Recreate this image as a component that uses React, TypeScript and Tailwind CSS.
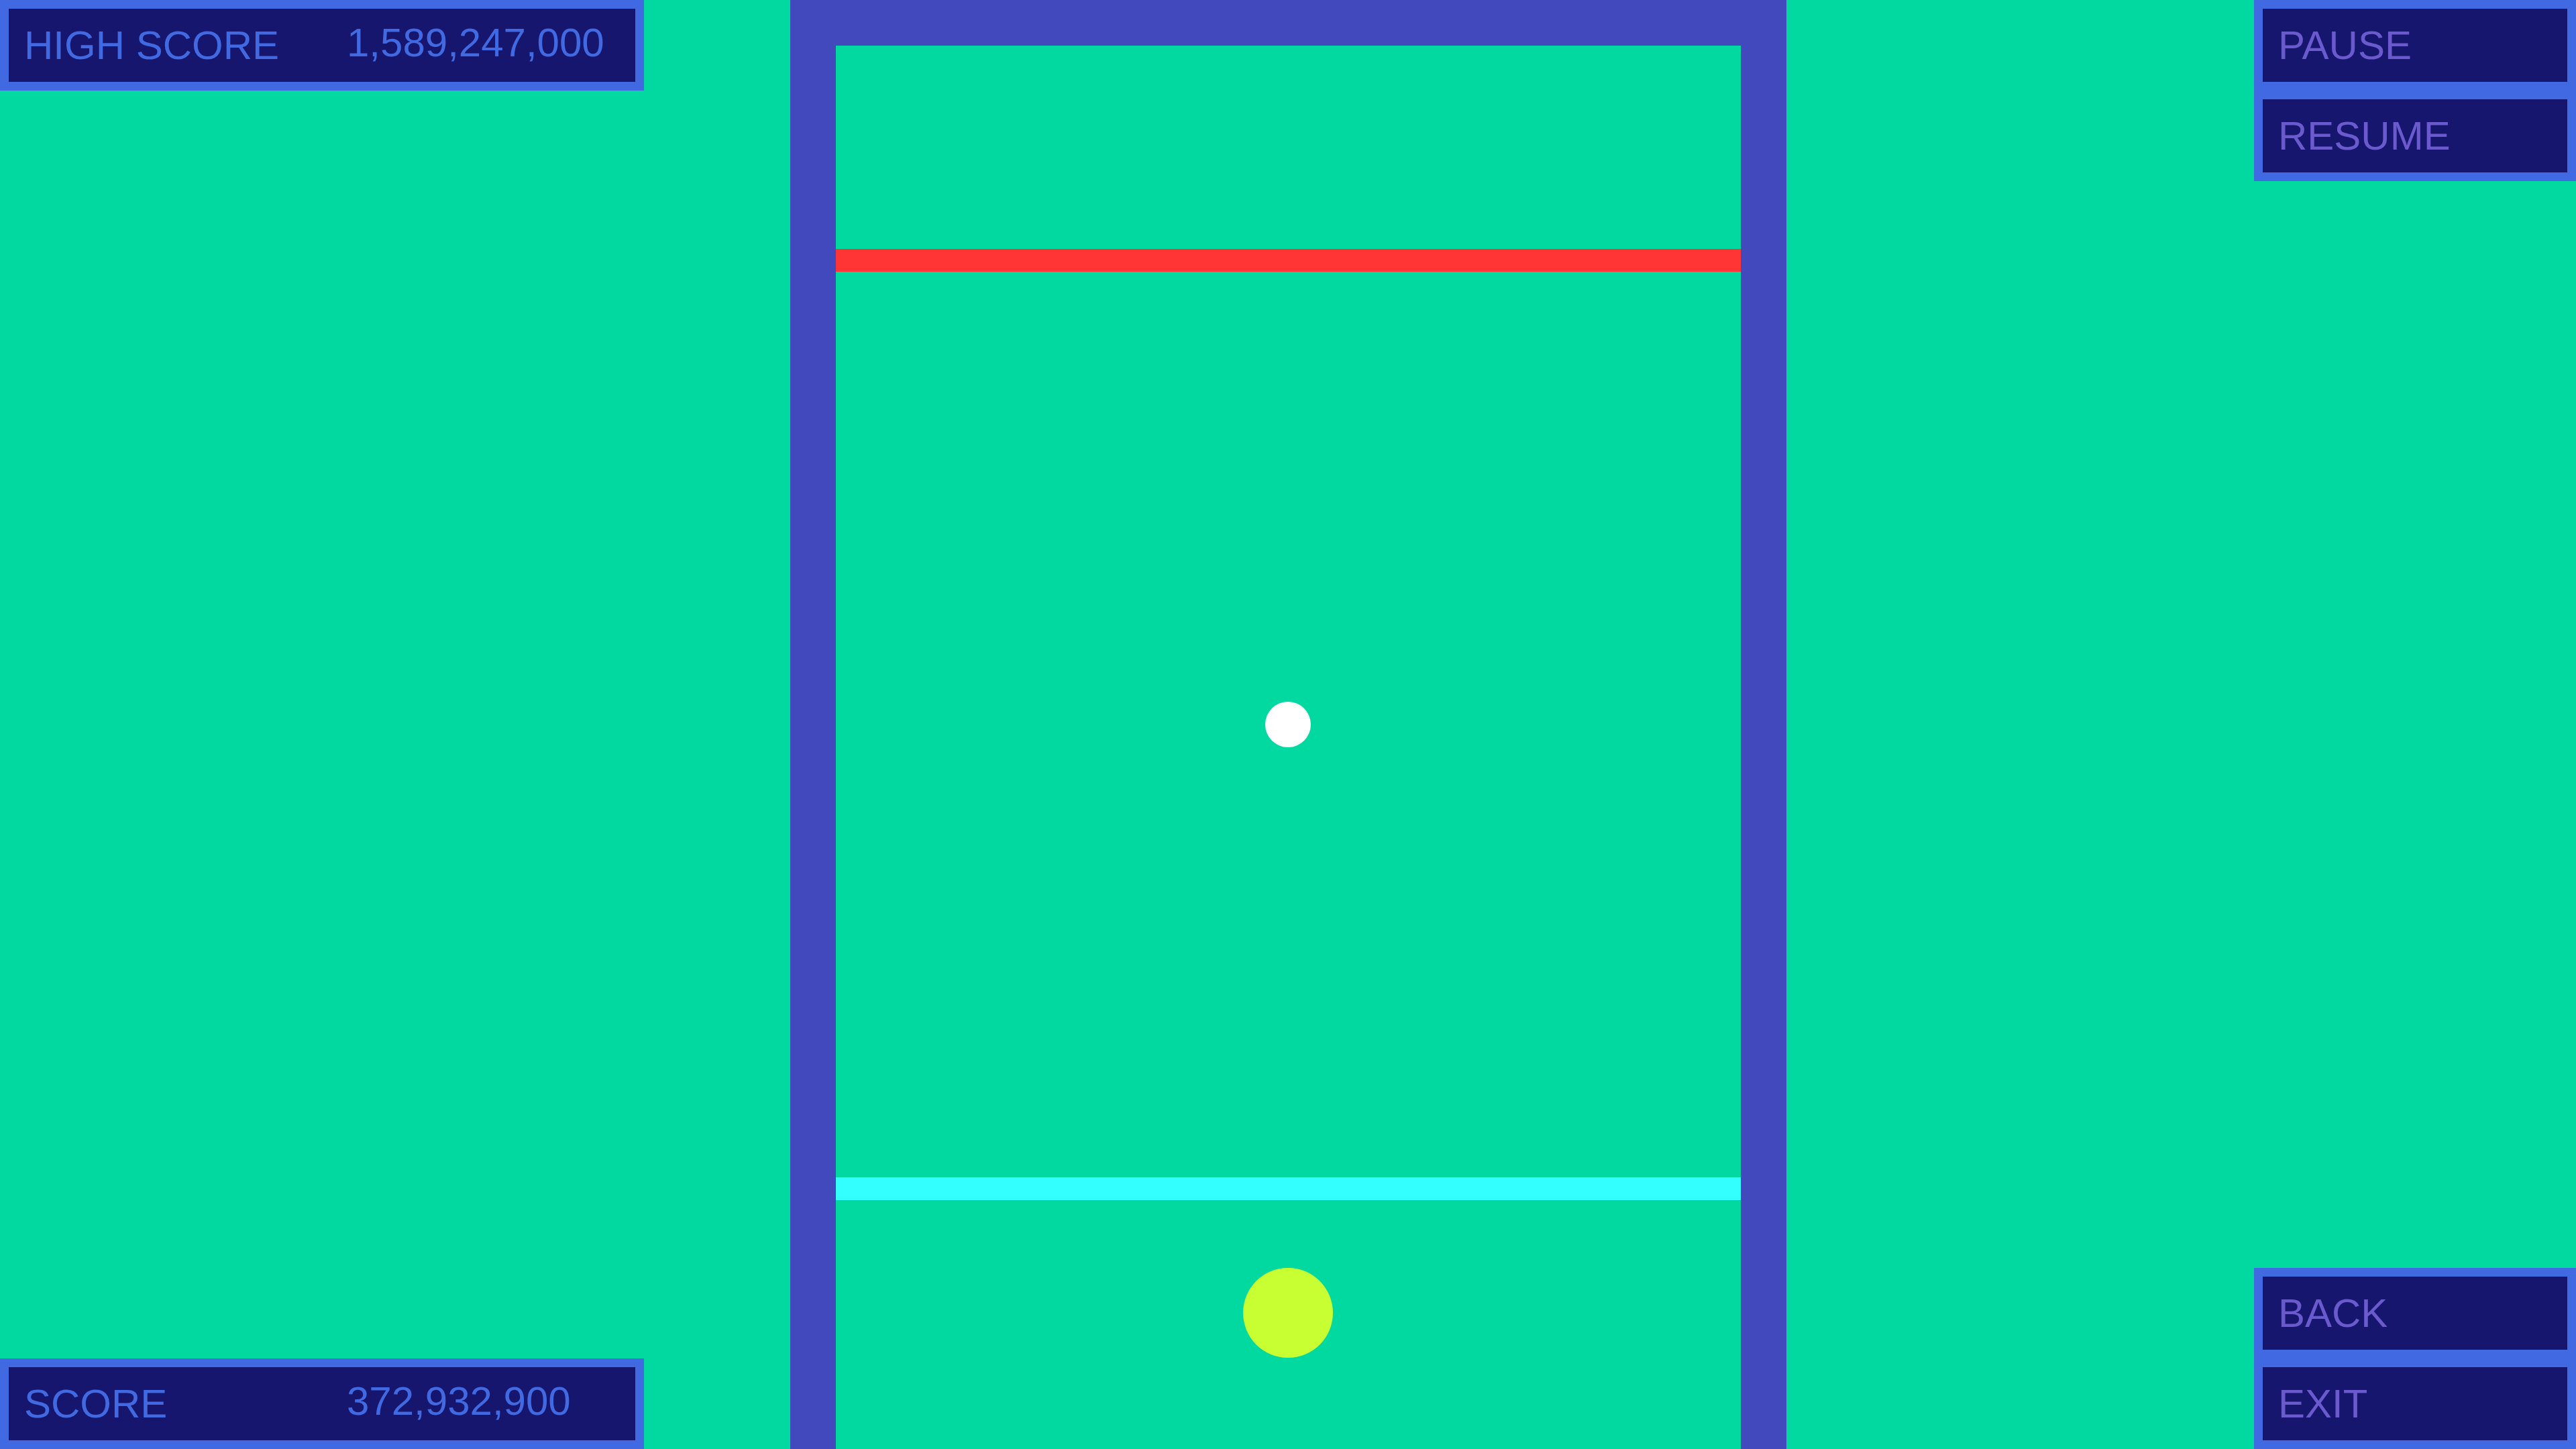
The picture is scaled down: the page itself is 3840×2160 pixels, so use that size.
import React from "react";

function ScorePanel({ label, value }: { label: string; value: string }) {
  return (
    <div className="w-[960px] h-[135px] border-[13px] border-[#4169e1] bg-[#16166f] flex items-center pl-[23px] text-[#4169e1] text-[60px] leading-none font-['Liberation_Sans',Arial,sans-serif]">
      <span className="w-[481px]">{label}</span>
      <span className="-translate-y-[4px]">{value}</span>
    </div>
  );
}

function MenuButton({ label }: { label: string }) {
  return (
    <div className="w-[480px] h-[135px] border-[13px] border-[#4169e1] bg-[#16166f] flex items-center pl-[23px] text-[#6a5acd] text-[60px] leading-none font-['Liberation_Sans',Arial,sans-serif]">
      {label}
    </div>
  );
}

export default function App() {
  return (
    <div className="w-[3840px] h-[2160px] bg-[#02d9a0] grid grid-cols-[1fr_1485px_1fr] overflow-hidden">
      <div className="flex flex-col justify-between items-start">
        <ScorePanel label="HIGH SCORE" value="1,589,247,000" />
        <ScorePanel label="SCORE" value="372,932,900" />
      </div>
      <div className="h-[2160px] border-x-[68px] border-t-[68px] border-[#4249bd] flex flex-col">
        <div className="mt-[303px] h-[34px] bg-[#ff3535]" />
        <div className="mt-[641px] mx-auto w-[68px] h-[68px] rounded-full bg-white" />
        <div className="mt-[641px] h-[34px] bg-[#33ffff]" />
        <div className="mt-[101px] mx-auto w-[134px] h-[134px] rounded-full bg-[#c8ff33]" />
      </div>
      <div className="flex flex-col justify-between items-end">
        <div className="flex flex-col">
          <MenuButton label="PAUSE" />
          <MenuButton label="RESUME" />
        </div>
        <div className="flex flex-col">
          <MenuButton label="BACK" />
          <MenuButton label="EXIT" />
        </div>
      </div>
    </div>
  );
}
